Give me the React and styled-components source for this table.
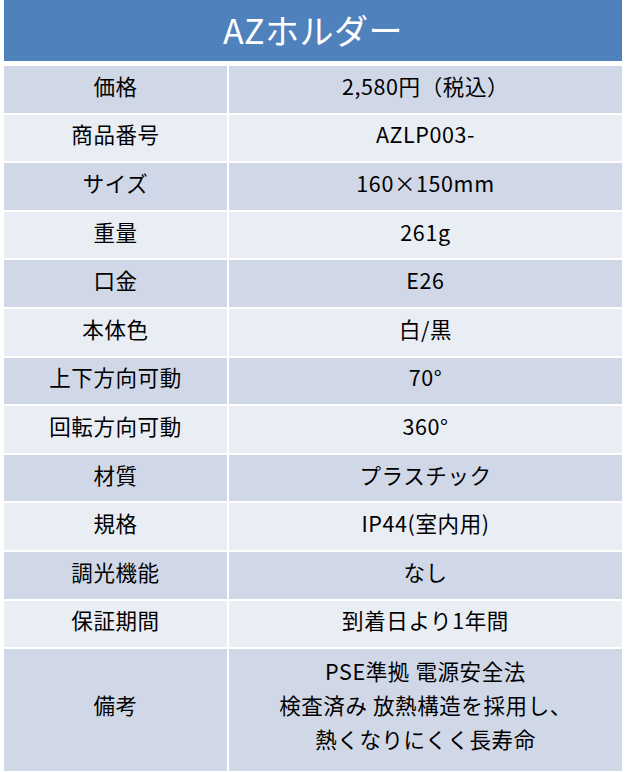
import React from 'react'
import styled, { createGlobalStyle } from 'styled-components'

// Global
const GlobalStyle = createGlobalStyle`
  html, body {
    margin: 0;
    padding: 0;
    background: #ffffff;
  }
  body {
    font-family: "Noto Sans CJK JP", "Noto Sans", sans-serif;
    color: #000000;
  }
`

// Styled-Component
const Page = styled.div`
  width: 626px;
  height: 772px;
  padding: 0 4px;
  box-sizing: border-box;
  overflow: hidden;
`

const Title = styled.div`
  height: 61px;
  background: #4f81bd;
  color: #ffffff;
  display: flex;
  align-items: center;
  justify-content: center;
  font-size: 34px;
  letter-spacing: 0.5px;
  padding-bottom: 2px;
  box-sizing: border-box;
`

const SpecTable = styled.div`
  margin-top: 5px;
  display: grid;
  grid-template-columns: 223px 393px;
  grid-auto-rows: 46.6px;
  column-gap: 2px;
  row-gap: 2px;
`

const Cell = styled.div`
  display: flex;
  align-items: center;
  justify-content: center;
  text-align: center;
  font-size: 21.5px;
  line-height: 34px;
  letter-spacing: 0.6px;
  background: ${({ $odd }) => ($odd ? '#d0d8e8' : '#e9edf4')};
  height: ${({ $tall }) => ($tall ? '122px' : 'auto')};
  padding-bottom: ${({ $tall }) => ($tall ? '10px' : '7px')};
  box-sizing: border-box;
`

const specs = [
  ['価格', '2,580円（税込）'],
  ['商品番号', 'AZLP003-'],
  ['サイズ', '160×150mm'],
  ['重量', '261g'],
  ['口金', 'E26'],
  ['本体色', '白/黒'],
  ['上下方向可動', '70°'],
  ['回転方向可動', '360°'],
  ['材質', 'プラスチック'],
  ['規格', 'IP44(室内用)'],
  ['調光機能', 'なし'],
  ['保証期間', '到着日より1年間'],
]

const remarks = ['PSE準拠 電源安全法', '検査済み 放熱構造を採用し、', '熱くなりにくく長寿命']

export default function App() {
  return (
    <>
      <GlobalStyle />
      <Page>
        <Title>AZホルダー</Title>
        <SpecTable>
          {specs.map(([label, value], i) => (
            <React.Fragment key={label}>
              <Cell $odd={i % 2 === 0}>{label}</Cell>
              <Cell $odd={i % 2 === 0}>{value}</Cell>
            </React.Fragment>
          ))}
          <Cell $odd $tall>備考</Cell>
          <Cell $odd $tall>
            <div>
              {remarks.map(line => (
                <div key={line}>{line}</div>
              ))}
            </div>
          </Cell>
        </SpecTable>
      </Page>
    </>
  )
}
